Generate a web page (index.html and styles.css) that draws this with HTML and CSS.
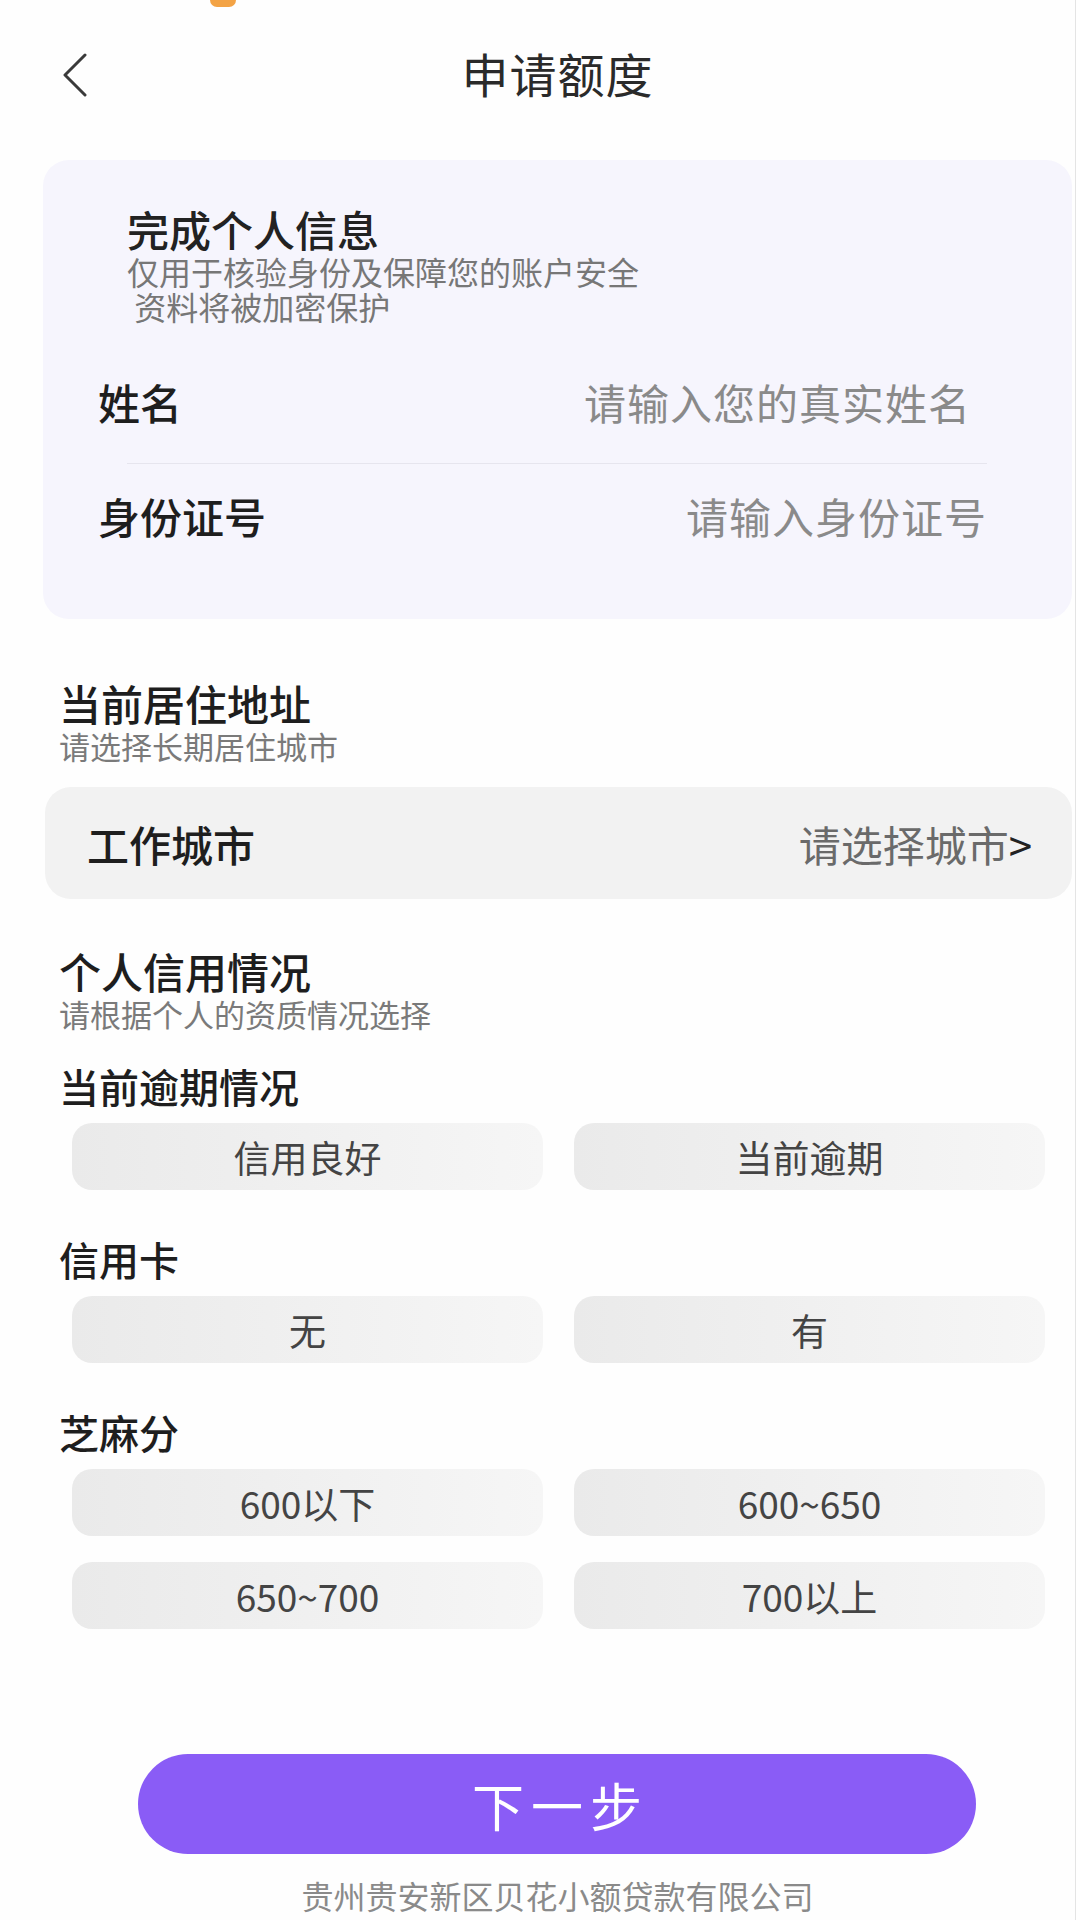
FILE: index.html
```html
<!DOCTYPE html>
<html lang="zh-CN">
<head>
    <meta charset="UTF-8">
    <meta name="viewport" content="width=device-width, initial-scale=1.0">
    <title>申请额度</title>
    <link rel="stylesheet" href="styles.css">
</head>
<body>
    <div class="page">
        <div class="status-bar"><span class="status-dot"></span></div>
        <header class="nav">
            <a href="#" class="back">
                <svg width="30" height="44" viewBox="0 0 30 44"><polyline points="25,2 5,22 25,42" fill="none" stroke="#3a3a3a" stroke-width="3" stroke-linejoin="round" stroke-linecap="round"/></svg>
            </a>
            <h1>申请额度</h1>
        </header>

        <section class="info-card">
            <div class="info-head">
                <h2>完成个人信息</h2>
                <p>仅用于核验身份及保障您的账户安全</p>
                <p>&nbsp;资料将被加密保护</p>
            </div>
            <div class="field field-name">
                <span class="field-label">姓名</span>
                <span class="field-hint">请输入您的真实姓名</span>
            </div>
            <div class="divider"></div>
            <div class="field field-id">
                <span class="field-label">身份证号</span>
                <span class="field-hint">请输入身份证号</span>
            </div>
        </section>

        <section class="block address">
            <h3>当前居住地址</h3>
            <p class="sub">请选择长期居住城市</p>
            <div class="city-bar">
                <span class="field-label">工作城市</span>
                <span class="city-pick">请选择城市<b>&gt;</b></span>
            </div>
        </section>

        <section class="block credit">
            <h3>个人信用情况</h3>
            <p class="sub">请根据个人的资质情况选择</p>

            <h4>当前逾期情况</h4>
            <div class="options">
                <div class="option">信用良好</div>
                <div class="option">当前逾期</div>
            </div>

            <h4 class="gap">信用卡</h4>
            <div class="options">
                <div class="option">无</div>
                <div class="option">有</div>
            </div>

            <h4 class="gap">芝麻分</h4>
            <div class="options">
                <div class="option">600以下</div>
                <div class="option">600~650</div>
                <div class="option">650~700</div>
                <div class="option">700以上</div>
            </div>
        </section>

        <a href="#" class="next-button">下一步</a>
        <div class="footer">贵州贵安新区贝花小额贷款有限公司</div>
    </div>
</body>
</html>
```

FILE: styles.css
```css
body {
    margin: 0;
    padding: 0;
    background: #fff;
    font-family: "Noto Sans CJK SC", "Noto Sans", sans-serif;
    color: #222;
}
.page {
    width: 1076px;
    min-height: 1920px;
    box-sizing: border-box;
    padding: 0 3px 0 43px;
    border-right: 1px solid #e4e4e4;
    background: #fefefe;
}
.status-bar {
    height: 20px;
}
.status-dot {
    display: block;
    width: 26px;
    height: 7px;
    margin-left: 167px;
    background: #f3a345;
    border-radius: 0 0 13px 13px;
}
.nav {
    height: 104px;
    display: flex;
    align-items: center;
    justify-content: center;
    position: relative;
}
.back {
    position: absolute;
    left: 17px;
    top: 33px;
    display: block;
}
.nav h1 {
    margin: 0;
    font-size: 47px;
    font-weight: 400;
    color: #2a2a2a;
    letter-spacing: 1px;
}
.info-card {
    margin-top: 36px;
    background: #f6f5fd;
    border-radius: 26px;
    padding: 44px 85px 53px 55px;
}
.info-head {
    margin-left: 29px;
}
.info-head h2 {
    margin: 0;
    font-size: 42px;
    line-height: 50px;
    font-weight: 500;
    color: #222;
}
.info-head p {
    margin: 0;
    font-size: 32px;
    line-height: 35px;
    color: #777;
}
.field {
    display: flex;
    justify-content: space-between;
    align-items: center;
}
.field-name {
    height: 124px;
    margin-top: 15px;
    padding-right: 16px;
}
.field-id {
    height: 102px;
}
.field-label {
    font-size: 42px;
    font-weight: 500;
    color: #1e1e1e;
}
.field-hint {
    font-size: 42px;
    color: #8a8a8a;
    letter-spacing: 1px;
}
.divider {
    height: 1px;
    margin-left: 29px;
    background: #e6e5ee;
}
.block {
    padding-left: 16px;
}
.block h3 {
    margin: 0;
    font-size: 42px;
    line-height: 50px;
    font-weight: 500;
    color: #1e1e1e;
}
.block .sub {
    margin: 0;
    font-size: 31px;
    line-height: 36px;
    color: #7a7a7a;
}
.address {
    margin-top: 59px;
}
.city-bar {
    margin: 23px 0 0 -14px;
    height: 112px;
    background: #f2f2f2;
    border-radius: 26px;
    display: flex;
    justify-content: space-between;
    align-items: center;
    padding: 0 40px 0 42px;
}
.city-pick {
    font-size: 42px;
    color: #6a6a6a;
}
.city-pick b {
    font-weight: 400;
    color: #222;
}
.credit {
    margin-top: 47px;
}
.credit h4 {
    margin: 29px 0 0;
    font-size: 40px;
    line-height: 50px;
    font-weight: 500;
    color: #1e1e1e;
}
.credit h4.gap {
    margin-top: 44px;
}
.options {
    display: grid;
    grid-template-columns: 1fr 1fr;
    column-gap: 31px;
    row-gap: 26px;
    margin: 12px 27px 0 13px;
}
.option {
    height: 67px;
    display: flex;
    align-items: center;
    justify-content: center;
    font-size: 37px;
    color: #444;
    border-radius: 20px;
    background: linear-gradient(90deg, #eaeaea, #f6f6f6);
}
.next-button {
    display: flex;
    align-items: center;
    justify-content: center;
    margin: 125px 96px 0 95px;
    height: 100px;
    border-radius: 50px;
    background: #8a5cf6;
    color: #fff;
    font-size: 52px;
    letter-spacing: 7px;
    padding-left: 7px;
    text-decoration: none;
}
.footer {
    margin-top: 21px;
    text-align: center;
    font-size: 32px;
    line-height: 40px;
    color: #8a8a8a;
}
```
